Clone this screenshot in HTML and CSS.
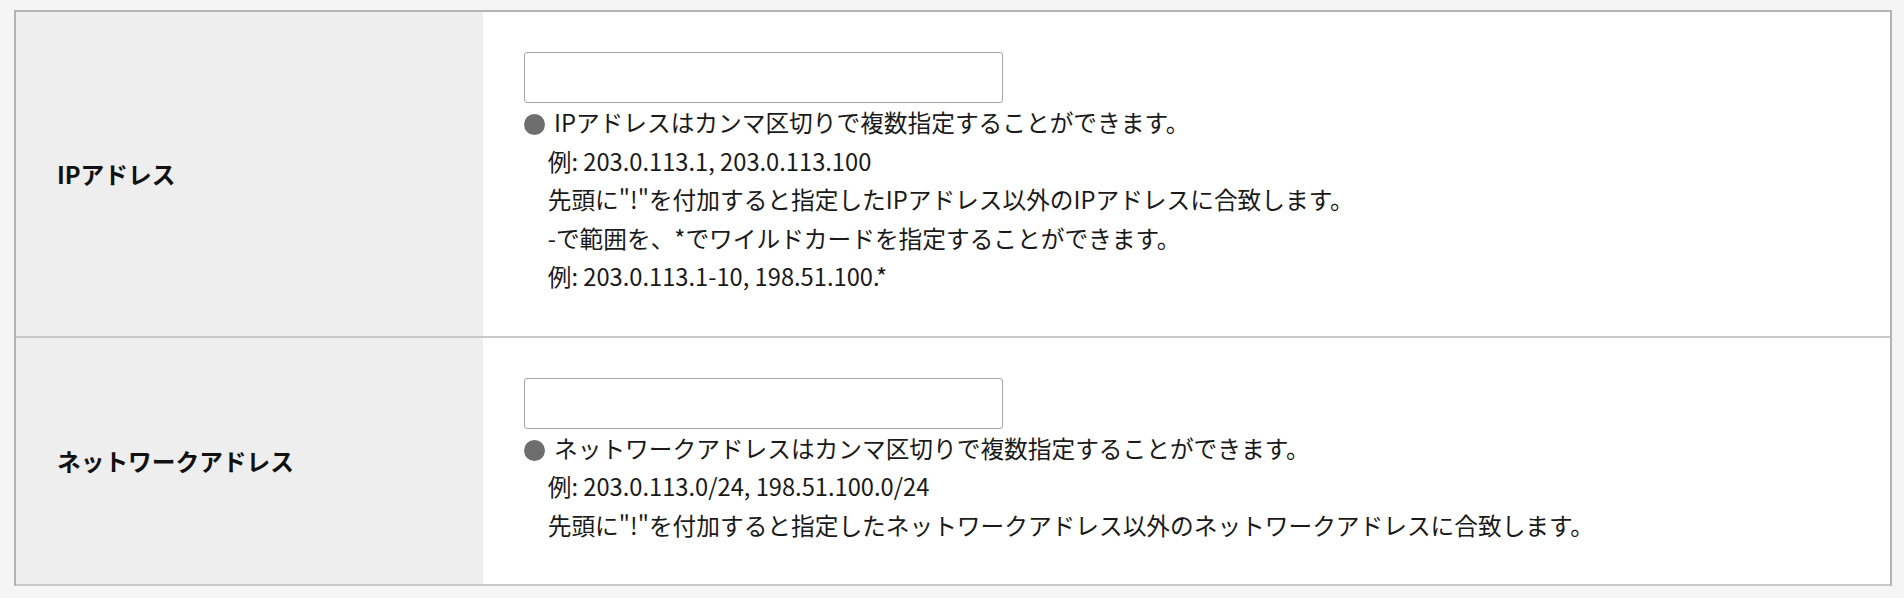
FILE: index.html
```html
<!DOCTYPE html>
<html lang="ja">

<head>
    <meta charset="utf-8">
    <title>アクセス制限</title>
    <link rel="stylesheet" href="styles.css">
</head>

<body>

    <div class="form-table">

        <div class="row">
            <div class="label">IPアドレス</div>
            <div class="field">
                <input type="text" class="text-input" name="ip">
                <p class="note"><span class="dot"></span>IPアドレスはカンマ区切りで複数指定することができます。<br>　例: 203.0.113.1, 203.0.113.100<br>　先頭に"!"を付加すると指定したIPアドレス以外のIPアドレスに合致します。<br>　-で範囲を、*でワイルドカードを指定することができます。<br>　例: 203.0.113.1-10, 198.51.100.*</p>
            </div>
        </div>

        <div class="row">
            <div class="label">ネットワークアドレス</div>
            <div class="field">
                <input type="text" class="text-input" name="network">
                <p class="note"><span class="dot"></span>ネットワークアドレスはカンマ区切りで複数指定することができます。<br>　例: 203.0.113.0/24, 198.51.100.0/24<br>　先頭に"!"を付加すると指定したネットワークアドレス以外のネットワークアドレスに合致します。</p>
            </div>
        </div>

    </div>

</body>

</html>
```

FILE: styles.css
```css
body {
    margin: 10px 12px 0 14px;
    background-color: #f5f5f5;
    color: #1a1a1a;
    font-family: "Noto Sans CJK JP", "Noto Sans", sans-serif;
    font-size: 23.7px;
}

p {
    padding: 0;
    margin: 0;
}

.form-table {
    border: 2px solid #b4b4b4;
    border-bottom: none;
    background-color: #fff;
}

.row {
    display: grid;
    grid-template-columns: 467px 1fr;
    border-bottom: 2px solid #c9c9c9;
}

.label {
    display: flex;
    align-items: center;
    padding: 0 40px 0 41px;
    background-color: #eee;
    font-weight: bold;
    color: #111;
}

.field {
    padding: 40px 41px 40px 41px;
}

.text-input {
    display: block;
    box-sizing: border-box;
    width: 479px;
    height: 51px;
    margin: 0;
    border: 1.5px solid #a6a6a6;
    border-radius: 3px;
    background-color: #fff;
    font-size: 20px;
}

.note {
    line-height: 38.5px;
}

/* 丸印 */
.dot {
    display: inline-block;
    width: 21px;
    height: 21px;
    margin-right: 9px;
    border-radius: 50%;
    background-color: #6e6e6e;
    vertical-align: -3px;
}
```
